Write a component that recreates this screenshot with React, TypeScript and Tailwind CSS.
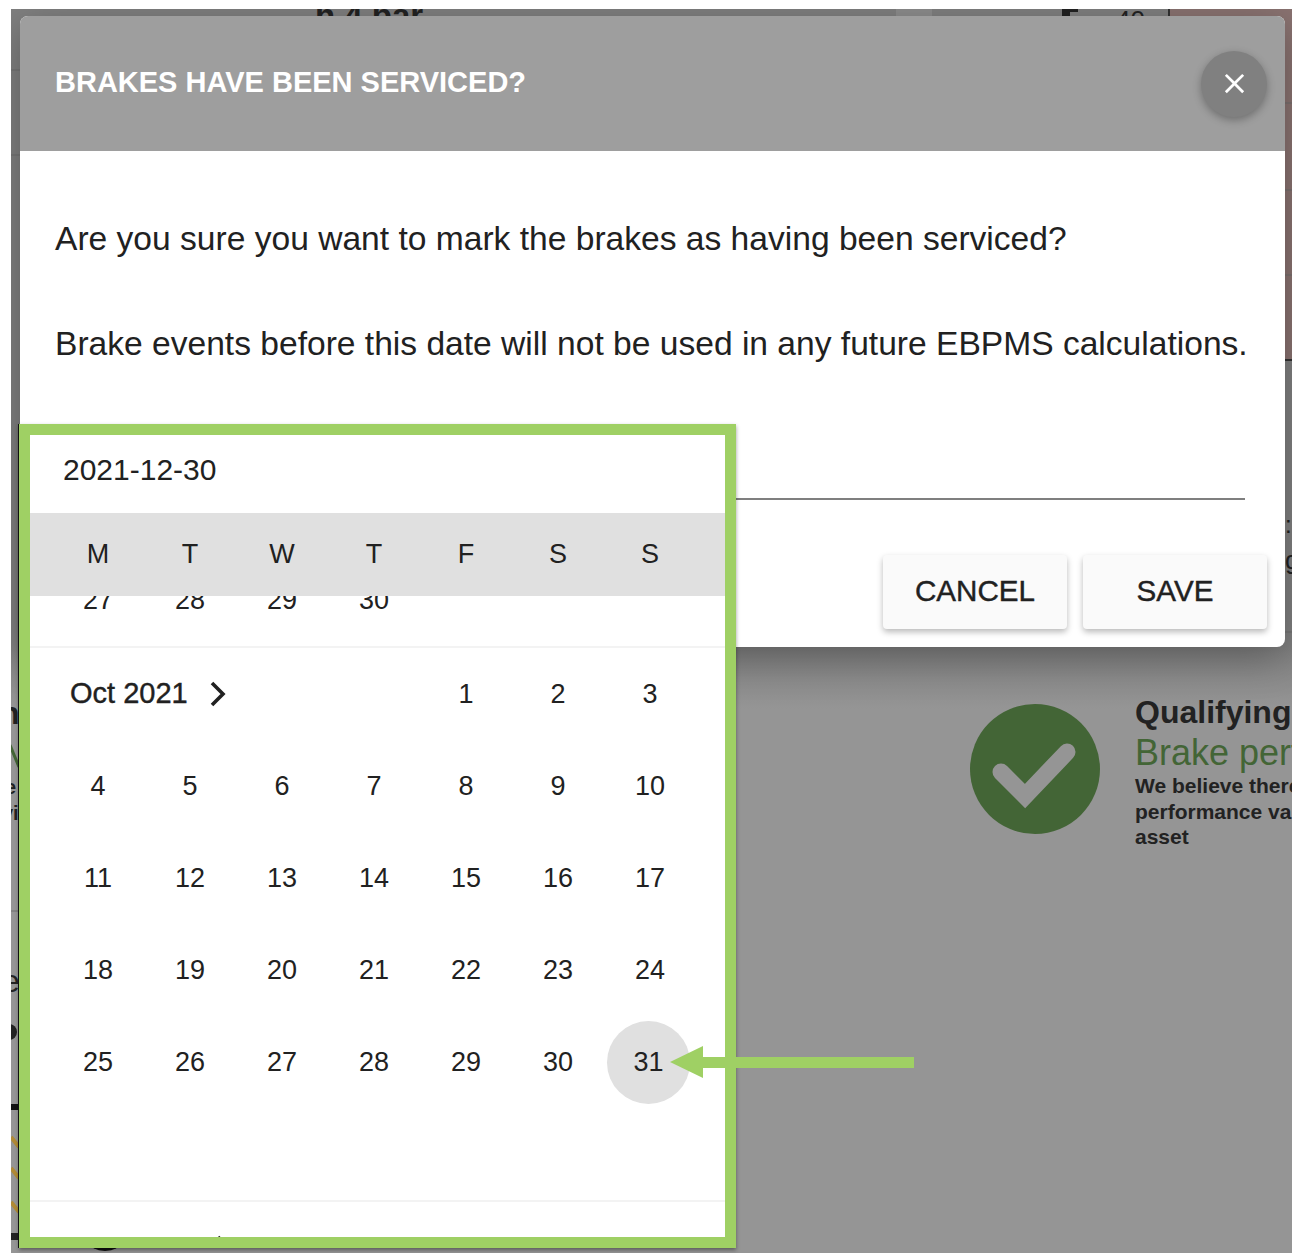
const sans = "font-['Liberation_Sans',Arial,sans-serif]";
const medium = "[-webkit-text-stroke:0.4px_#212121]";

const weekdays = ["M", "T", "W", "T", "F", "S", "S"];
const octWeeks = [
  ["4", "5", "6", "7", "8", "9", "10"],
  ["11", "12", "13", "14", "15", "16", "17"],
  ["18", "19", "20", "21", "22", "23", "24"],
  ["25", "26", "27", "28", "29", "30", "31"],
];

function Cell({ children }: { children?: React.ReactNode }) {
  return <div className="h-[92px] flex items-center justify-center">{children}</div>;
}

function MonthLabel({ label, raised }: { label: string; raised?: boolean }) {
  return (
    <div className={`col-span-4 h-[92px] pl-[18px] flex items-center gap-[21px] text-[29px] ${medium}`}>
      {label}
      <svg className={raised ? "-mt-[10px]" : ""} width="18" height="26" viewBox="0 0 18 26" fill="none" stroke="#212121" strokeWidth="3.6">
        <path d="M3 2l11 11L3 24" />
      </svg>
    </div>
  );
}

// what is left visible of the page behind the dimmed backdrop, in picture coordinates
function PageBehind() {
  return (
    <svg className="absolute inset-0" width="1281" height="1244" viewBox="11 9 1281 1244">
      <rect x="1170" y="9" width="122" height="351" fill="#8a7371" />
      <rect x="1170" y="359" width="122" height="2" fill="#333" />
      <rect x="1168" y="9" width="2" height="8" fill="#333" />
      <rect x="896" y="9" width="36" height="8" fill="#8d8d8d" />
      <rect x="1062" y="9" width="8" height="8" fill="#222" />
      <rect x="1062" y="9" width="16" height="3" fill="#222" />
      <path d="M11 70h9M11 155h9M11 911h8M1285 103h7M1285 190h7M1285 275h7M1285 632h7" stroke="#6f6f6f" />
      <g fontFamily="Liberation Sans" fill="#222">
        <text x="315" y="27" fontSize="33" fontWeight="700">h 4 bar</text>
        <text x="1116" y="29" fontSize="26">40</text>
        <text x="1285" y="533" fontSize="24">:</text>
        <text x="1285" y="569" fontSize="26">g</text>
        <text x="0" y="724" fontSize="32" fontWeight="700">n</text>
        <text x="5" y="794" fontSize="20" fontWeight="700">e</text>
        <text x="2" y="820" fontSize="20" fontWeight="700">vi</text>
        <text x="2" y="992" fontSize="32">e</text>
      </g>
      <path d="M10 745l9 22" stroke="#436536" strokeWidth="3" />
      <circle cx="9" cy="1032" r="8" fill="#222" />
      <rect x="11" y="1104" width="8" height="6" fill="#111" />
      <rect x="11" y="1233" width="8" height="7" fill="#222" />
      <path d="M11 1137l8 10M11 1168l8 10M11 1202l8 10" stroke="#b08a35" strokeWidth="4" />
      <ellipse cx="105" cy="1242" rx="16" ry="9" fill="#111" />
    </svg>
  );
}

function DatePicker() {
  return (
    <div className="absolute left-[8px] top-[415px] w-[717px] h-[824px] border-[11px] border-[#9fd064] bg-white text-[#212121] shadow-[-1px_0_0_#111,0_2px_4px_rgba(0,0,0,0.4)] overflow-hidden">
      <div className="h-[78px] pl-[33px] pb-[10px] flex items-center text-[30px]">2021-12-30</div>
      <div className="relative z-10 h-[83px] pl-[22px] bg-[#e0e0e0] grid grid-cols-[repeat(7,92px)] items-center text-[27px]">
        {weekdays.map((d, i) => (
          <div key={i} className="text-center">{d}</div>
        ))}
      </div>
      <div className="h-[52px] overflow-hidden border-b-2 border-[#f3f3f3]">
        <div className="-mt-[42px] pl-[22px] grid grid-cols-[repeat(7,92px)] text-[27px]">
          {["27", "28", "29", "30"].map((d) => (
            <Cell key={d}>{d}</Cell>
          ))}
        </div>
      </div>
      <div className="pl-[22px] grid grid-cols-[repeat(7,92px)] text-[27px]">
        <MonthLabel label="Oct 2021" />
        {["1", "2", "3"].map((d) => (
          <Cell key={d}>{d}</Cell>
        ))}
        {octWeeks.flat().map((d) => (
          <Cell key={d}>
            {d === "31" ? (
              <span className="-ml-[3px] w-[83px] h-[83px] rounded-full bg-[#e0e0e0] flex items-center justify-center">{d}</span>
            ) : (
              d
            )}
          </Cell>
        ))}
      </div>
      <div className="mt-[92px] border-t-2 border-[#f3f3f3] pt-[5px] pl-[22px] grid grid-cols-[repeat(7,92px)]">
        <MonthLabel label="Nov 2021" raised />
      </div>
    </div>
  );
}

export default function App() {
  return (
    <div className={`${sans} w-[1302px] h-[1260px] bg-white pl-[11px] pt-[9px]`}>
      <div className="relative w-[1281px] h-[1244px] overflow-hidden bg-[linear-gradient(#808080_0,#808080_636px,#959595_700px)] flow-root">
        <PageBehind />

        <div className="relative ml-[9px] mt-[7px] w-[1265px] h-[631px] bg-white rounded-[8px] overflow-hidden shadow-[0_10px_40px_rgba(0,0,0,0.3)]">
          <div className="h-[135px] bg-[#9e9e9e] flex items-center justify-between pl-[35px] pr-[18px]">
            <div className="pb-[2px] text-[29px] font-bold text-white">BRAKES HAVE BEEN SERVICED?</div>
            <button className="w-[66px] h-[66px] rounded-full bg-[#808080] flex items-center justify-center shadow-[0_3px_8px_rgba(0,0,0,0.3)]">
              <svg width="33" height="33" viewBox="0 0 24 24" fill="#fff">
                <path d="M19 6.41 17.59 5 12 10.59 6.41 5 5 6.41 10.59 12 5 17.59 6.41 19 12 13.41 17.59 19 19 17.59 13.41 12z" />
              </svg>
            </button>
          </div>
          <div className="pl-[35px] pr-[18px] text-[#212121]">
            <p className="mt-[68px] text-[33.6px] leading-[40px] whitespace-nowrap">
              Are you sure you want to mark the brakes as having been serviced?
            </p>
            <p className="mt-[65px] text-[33.6px] leading-[40px] whitespace-nowrap">
              Brake events before this date will not be used in any future EBPMS calculations.
            </p>
            <div className="mt-[134px] w-[1190px] h-[2px] bg-[#7f7f7f]" />
            <div className="mt-[55px] flex justify-end gap-[16px]">
              <button className={`w-[184px] h-[74px] pb-[2px] rounded-[4px] bg-[#fafafa] text-[29.6px] text-[#212121] shadow-[0_3px_6px_rgba(0,0,0,0.28)] ${medium}`}>CANCEL</button>
              <button className={`w-[184px] h-[74px] pb-[2px] rounded-[4px] bg-[#fafafa] text-[29.6px] text-[#212121] shadow-[0_3px_6px_rgba(0,0,0,0.28)] ${medium}`}>SAVE</button>
            </div>
          </div>
        </div>

        <div className="relative mt-[57px] ml-[959px] flex gap-[35px] text-[#222] whitespace-nowrap">
          <svg className="shrink-0" width="130" height="130" viewBox="0 0 130 130">
            <circle cx="65" cy="65" r="65" fill="#436536" />
            <path d="M31 68l24 24 42-44" fill="none" stroke="#959595" strokeWidth="17" strokeLinecap="round" />
          </svg>
          <div className="-mt-[13px]">
            <div className="text-[32px] font-bold leading-[42px]">Qualifying brake</div>
            <div className="text-[36px] leading-[40px] text-[#436536]">Brake performance</div>
            <div className="text-[21px] font-bold leading-[25.5px]">
              We believe there is sufficient
              <br />
              performance value for this
              <br />
              asset
            </div>
          </div>
        </div>

        <DatePicker />

        {/* annotation arrow */}
        <svg className="absolute left-[659px] top-[1036px]" width="245" height="34" viewBox="0 0 245 34" fill="#9fd064">
          <path d="M0 17 33 1v11h211v11H33v10z" />
        </svg>
      </div>
    </div>
  );
}
